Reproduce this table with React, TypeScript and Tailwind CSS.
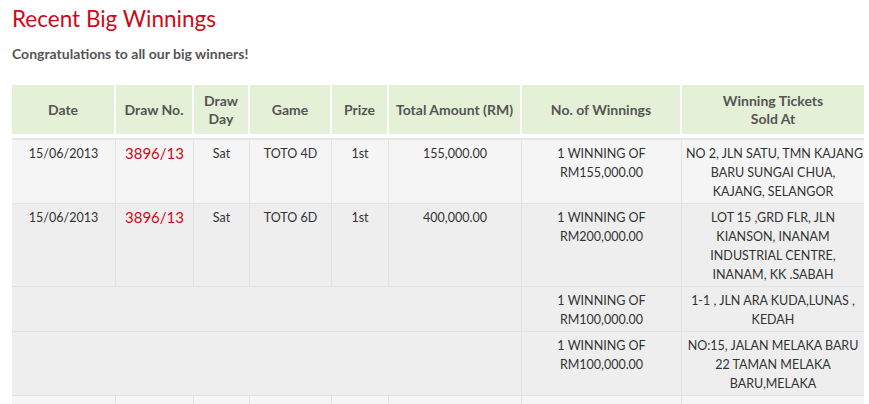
import React from "react";

const widths = [104, 78, 56, 82, 57, 133, 160, 182];

const headers: React.ReactNode[] = [
  "Date",
  "Draw No.",
  <>Draw<br />Day</>,
  "Game",
  "Prize",
  "Total Amount (RM)",
  "No. of Winnings",
  <>Winning Tickets<br />Sold At</>,
];

const td = "border-r border-b border-[#e2e2e2] pt-[4px] pb-[2px] px-1 align-top text-center leading-[19px] whitespace-nowrap";
const tdLast = "border-b border-[#e2e2e2] pt-[4px] pb-[2px] px-1 align-top text-center leading-[19px] whitespace-nowrap";
const top = "border-t-2 border-t-[#e6e6e6]";

export default function App() {
  return (
    <div className="w-[869px] h-[404px] overflow-hidden bg-white" style={{ fontFamily: "Lato, 'Open Sans', sans-serif" }}>
      <div className="pl-[12px] pt-[4px]">
        <h1 className="text-[22.5px] leading-[29px] text-[#cc0a1a]">Recent Big Winnings</h1>
        <p className="mt-[12px] text-[14px] leading-[18px] font-bold text-[#555555]">Congratulations to all our big winners!</p>
      </div>
      <table className="ml-[12px] mt-[22px] border-separate border-spacing-0 text-[12.5px] text-[#333333] table-fixed" style={{ width: 852 }}>
        <colgroup>
          {widths.map((w, i) => (
            <col key={i} style={{ width: w }} />
          ))}
        </colgroup>
        <thead>
          <tr>
            {headers.map((h, i) => (
              <th
                key={i}
                className={`h-[49px] bg-[#e4f1d6] text-[14px] leading-[18px] font-bold text-[#555555] text-center align-middle whitespace-nowrap ${i < 7 ? "border-r-2 border-white" : ""}`}
              >
                {h}
              </th>
            ))}
          </tr>
          <tr>
            <td colSpan={8} className="h-[4px] p-0"></td>
          </tr>
        </thead>
        <tbody>
          <tr className="bg-[#f5f5f5]">
            <td className={`${td} ${top}`}>15/06/2013</td>
            <td className={`${td} ${top} text-[15px] text-[#cc0a1a]`}>3896/13</td>
            <td className={`${td} ${top}`}>Sat</td>
            <td className={`${td} ${top}`}>TOTO 4D</td>
            <td className={`${td} ${top}`}>1st</td>
            <td className={`${td} ${top}`}>155,000.00</td>
            <td className={`${td} ${top}`}>1 WINNING OF<br />RM155,000.00</td>
            <td className={`${tdLast} ${top}`}>NO 2, JLN SATU, TMN KAJANG<br />BARU SUNGAI CHUA,<br />KAJANG, SELANGOR</td>
          </tr>
          <tr className="bg-[#eeeeee]">
            <td className={td}>15/06/2013</td>
            <td className={`${td} text-[15px] text-[#cc0a1a]`}>3896/13</td>
            <td className={td}>Sat</td>
            <td className={td}>TOTO 6D</td>
            <td className={td}>1st</td>
            <td className={td}>400,000.00</td>
            <td className={td}>1 WINNING OF<br />RM200,000.00</td>
            <td className={tdLast}>LOT 15 ,GRD FLR, JLN<br />KIANSON, INANAM<br />INDUSTRIAL CENTRE,<br />INANAM, KK .SABAH</td>
          </tr>
          <tr className="bg-[#eeeeee]">
            <td colSpan={6} className={td}></td>
            <td className={td}>1 WINNING OF<br />RM100,000.00</td>
            <td className={tdLast}>1-1 , JLN ARA KUDA,LUNAS ,<br />KEDAH</td>
          </tr>
          <tr className="bg-[#eeeeee]">
            <td colSpan={6} className={td}></td>
            <td className={td}>1 WINNING OF<br />RM100,000.00</td>
            <td className={tdLast}>NO:15, JALAN MELAKA BARU<br />22 TAMAN MELAKA<br />BARU,MELAKA</td>
          </tr>
          <tr className="bg-[#f5f5f5]">
            <td className={`${td} h-[30px]`}></td>
            <td className={td}></td>
            <td className={td}></td>
            <td className={td}></td>
            <td className={td}></td>
            <td className={td}></td>
            <td className={td}></td>
            <td className={tdLast}></td>
          </tr>
        </tbody>
      </table>
    </div>
  );
}
